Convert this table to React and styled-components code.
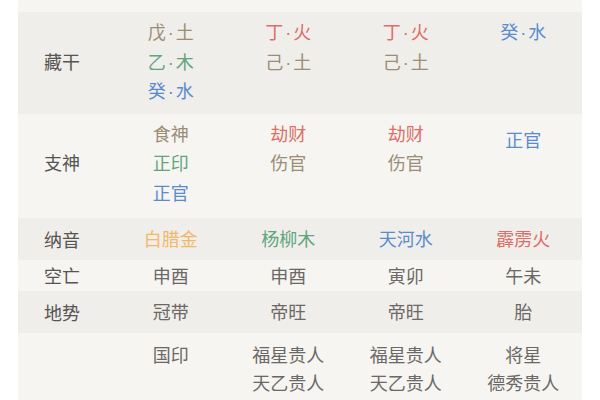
import React from 'react';
import styled, { createGlobalStyle } from 'styled-components';

const GlobalStyle = createGlobalStyle`
  html, body {
    margin: 0;
    padding: 0;
    background: #ffffff;
    overflow: hidden;
  }
  body {
    font-family: "Noto Sans CJK SC", "Noto Sans", sans-serif;
  }
`;

const COLORS = {
  earth: '#9c8d76',
  wood: '#5fa67e',
  water: '#5a8bcf',
  fire: '#dc6f69',
  metal: '#f2b86a',
  gray: '#6b6865',
};

const Table = styled.div`
  width: 564px;
  margin: 0 18px;
  display: flex;
  flex-direction: column;
`;

const Row = styled.div`
  display: grid;
  grid-template-columns: 94px repeat(4, 1fr);
  align-items: ${props => props.$top ? 'start' : 'center'};
  background: ${props => props.$dark ? '#f0eeea' : '#f6f5f2'};
  height: ${props => props.$height ? `${props.$height}px` : 'auto'};
  padding: ${props => props.$pad || '0'};
  box-sizing: border-box;
`;

const Label = styled.div`
  padding-left: 26px;
  font-size: 18px;
  color: #575452;
  align-self: center;
  line-height: 29px;
`;

const Cell = styled.div`
  display: flex;
  flex-direction: column;
  align-items: center;
  padding-top: ${props => props.$offset || 0}px;
`;

const Item = styled.div`
  height: ${props => props.$lh || 29.5}px;
  font-size: 18px;
  line-height: ${props => props.$lh || 29.5}px;
  color: ${props => COLORS[props.$c] || COLORS.gray};
  white-space: nowrap;
`;

const Dot = styled.span`
  font-family: "Liberation Sans", sans-serif;
  line-height: 0;
  margin: 0 2px;
`;

const Stem = ({ a, b, c }) => (
  <Item $c={c}>
    {a}
    <Dot>·</Dot>
    {b}
  </Item>
);

const App = () => {
  return (
    <>
      <GlobalStyle />
      <Table>
        <Row $height={12} />

        <Row $dark $top $pad="5px 0 8px">
          <Label>藏干</Label>
          <Cell>
            <Stem a="戊" b="土" c="earth" />
            <Stem a="乙" b="木" c="wood" />
            <Stem a="癸" b="水" c="water" />
          </Cell>
          <Cell>
            <Stem a="丁" b="火" c="fire" />
            <Stem a="己" b="土" c="earth" />
          </Cell>
          <Cell>
            <Stem a="丁" b="火" c="fire" />
            <Stem a="己" b="土" c="earth" />
          </Cell>
          <Cell>
            <Stem a="癸" b="水" c="water" />
          </Cell>
        </Row>

        <Row $top $pad="5px 0 11px">
          <Label>支神</Label>
          <Cell>
            <Item $c="earth">食神</Item>
            <Item $c="wood">正印</Item>
            <Item $c="water">正官</Item>
          </Cell>
          <Cell>
            <Item $c="fire">劫财</Item>
            <Item $c="earth">伤官</Item>
          </Cell>
          <Cell>
            <Item $c="fire">劫财</Item>
            <Item $c="earth">伤官</Item>
          </Cell>
          <Cell $offset={6}>
            <Item $c="water">正官</Item>
          </Cell>
        </Row>

        <Row $dark $height={42}>
          <Label>纳音</Label>
          <Cell><Item $c="metal">白腊金</Item></Cell>
          <Cell><Item $c="wood">杨柳木</Item></Cell>
          <Cell><Item $c="water">天河水</Item></Cell>
          <Cell><Item $c="fire">霹雳火</Item></Cell>
        </Row>

        <Row $height={31}>
          <Label>空亡</Label>
          <Cell><Item>申酉</Item></Cell>
          <Cell><Item>申酉</Item></Cell>
          <Cell><Item>寅卯</Item></Cell>
          <Cell><Item>午未</Item></Cell>
        </Row>

        <Row $dark $height={42}>
          <Label>地势</Label>
          <Cell><Item>冠带</Item></Cell>
          <Cell><Item>帝旺</Item></Cell>
          <Cell><Item>帝旺</Item></Cell>
          <Cell><Item>胎</Item></Cell>
        </Row>

        <Row $top $pad="7px 0 10px">
          <Label />
          <Cell>
            <Item $lh={28}>国印</Item>
          </Cell>
          <Cell>
            <Item $lh={28}>福星贵人</Item>
            <Item $lh={28}>天乙贵人</Item>
          </Cell>
          <Cell>
            <Item $lh={28}>福星贵人</Item>
            <Item $lh={28}>天乙贵人</Item>
          </Cell>
          <Cell>
            <Item $lh={28}>将星</Item>
            <Item $lh={28}>德秀贵人</Item>
          </Cell>
        </Row>
      </Table>
    </>
  );
};

export default App;
